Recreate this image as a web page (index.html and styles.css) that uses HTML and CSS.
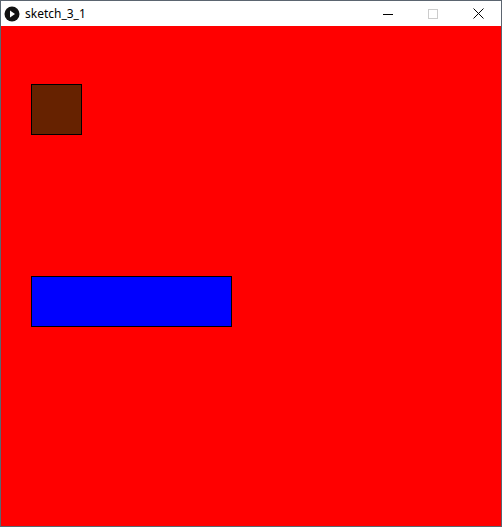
FILE: index.html
```html
<!DOCTYPE html>
<html>
<head>
<meta charset="utf-8">
<link rel="stylesheet" href="styles.css">
</head>
<body>
<div class="window">
  <div class="titlebar">
    <svg class="app-icon" width="16" height="16" viewBox="0 0 16 16">
      <circle cx="8" cy="8" r="7.5" fill="#111"/>
      <polygon points="6,4.5 11,8 6,11.5" fill="#fff"/>
    </svg>
    <span class="title">sketch_3_1</span>
    <div class="controls">
      <div class="ctrl">
        <svg width="10" height="10" viewBox="0 0 10 10"><line x1="0" y1="5.5" x2="10" y2="5.5" stroke="#000" stroke-width="1"/></svg>
      </div>
      <div class="ctrl">
        <svg width="10" height="10" viewBox="0 0 10 10"><rect x="0.5" y="0.5" width="9" height="9" fill="none" stroke="#ccc" stroke-width="1"/></svg>
      </div>
      <div class="ctrl ctrl-close">
        <svg width="11" height="11" viewBox="0 0 11 11"><path d="M0.5 0.5 L10.5 10.5 M10.5 0.5 L0.5 10.5" stroke="#000" stroke-width="1"/></svg>
      </div>
    </div>
  </div>
  <div class="canvas">
    <div class="shape square"></div>
    <div class="shape bar"></div>
  </div>
</div>
</body>
</html>
```
FILE: styles.css
```css
html, body {
  margin: 0;
  padding: 0;
  background: #fff;
}
.window {
  width: 500px;
  border: 1px solid #5b6570;
  display: flex;
  flex-direction: column;
}
.titlebar {
  height: 25px;
  background: #fff;
  display: flex;
  align-items: center;
  font-family: "Segoe UI", "Noto Sans", "Liberation Sans", sans-serif;
  font-size: 12px;
  color: #000;
}
.app-icon {
  margin-left: 3px;
  flex: none;
}
.title {
  margin-left: 5px;
  line-height: 25px;
}
.controls {
  margin-left: auto;
  display: flex;
  height: 25px;
}
.ctrl {
  width: 45px;
  display: flex;
  align-items: center;
  justify-content: center;
}
.ctrl-close {
  width: 46px;
}
.canvas {
  position: relative;
  width: 500px;
  height: 500px;
  background: #ff0000;
}
.shape {
  position: absolute;
  box-sizing: border-box;
  border: 1px solid #000;
}
.square {
  left: 30px;
  top: 58px;
  width: 51px;
  height: 51px;
  background: #662200;
}
.bar {
  left: 30px;
  top: 250px;
  width: 201px;
  height: 51px;
  background: #0000ff;
}
```
